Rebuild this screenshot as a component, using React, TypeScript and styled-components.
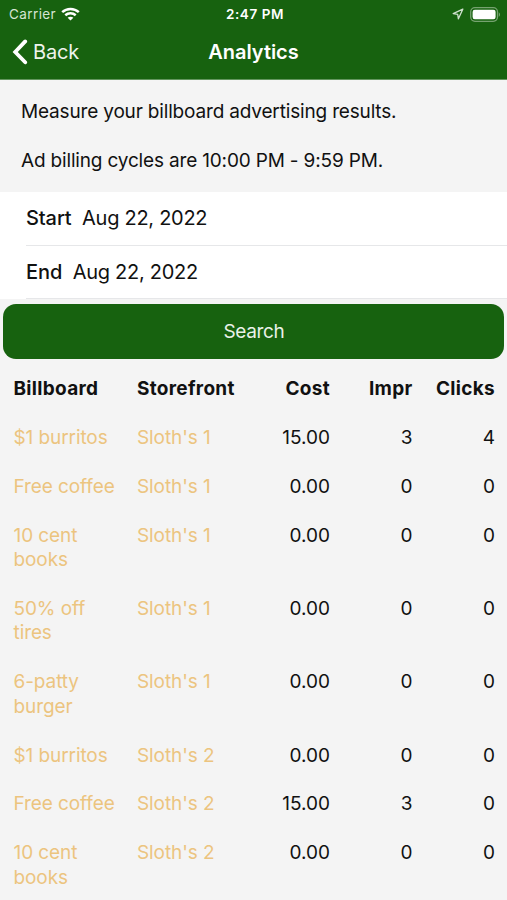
import React from "react";
import styled, { createGlobalStyle } from "styled-components";

const GlobalStyle = createGlobalStyle`
  * { box-sizing: border-box; }
  html, body { margin: 0; padding: 0; background: #f4f4f4; overflow: hidden; }
  #root { font-family: Inter, "Liberation Sans", sans-serif; }
`;

const green = "#17620f";

const Screen = styled.div`
  width: 507px;
  height: 900px;
  overflow: hidden;
  background: #f4f4f4;
  color: #111;
  font-size: 19px;
  line-height: 24.45px;
`;

const Header = styled.header`
  height: 79.5px;
  background: ${green};
  color: #fff;
  border-bottom: 1px solid #63965e;
`;

const StatusBar = styled.div`
  display: grid;
  grid-template-columns: 1fr auto 1fr;
  align-items: center;
  height: 27px;
  padding: 0 6px 0 9px;
  font-size: 13.5px;
  line-height: 27px;
`;

const Carrier = styled.div`
  display: flex;
  align-items: center;
  gap: 5px;
  color: #d5e5d3;
  letter-spacing: 0.4px;
`;

const Clock = styled.div`
  padding-top: 1px;
  font-weight: 600;
  letter-spacing: 0.6px;
`;

const StatusIcons = styled.div`
  display: flex;
  align-items: center;
  justify-content: flex-end;
  gap: 6px;
`;

const NavBar = styled.nav`
  display: grid;
  grid-template-columns: 1fr auto 1fr;
  align-items: center;
  height: 50px;
  padding: 0 12px;
`;

const BackButton = styled.div`
  display: flex;
  align-items: center;
  gap: 5px;
  font-size: 20px;
  letter-spacing: -0.2px;
  color: #edf4ec;
`;

const Title = styled.div`
  padding-top: 1px;
  font-size: 20px;
  font-weight: 600;
  letter-spacing: -0.05px;
`;

const Intro = styled.section`
  height: 112.5px;
  padding: 20.5px 21px 0;
  letter-spacing: -0.17px;
`;

const Paragraph = styled.p`
  margin: 0 0 24.45px;
  white-space: nowrap;
`;

const DateList = styled.section`
  height: 107px;
  background: #fff;
`;

const DateRow = styled.div`
  display: flex;
  align-items: center;
  gap: 10.5px;
  height: 53.5px;
  margin-left: 26px;
  border-bottom: 1px solid #e6e7e9;
  font-size: 20px;
  letter-spacing: -0.28px;
`;

const DateLabel = styled.span`
  font-weight: 500;
  letter-spacing: -0.1px;
`;

const SearchButton = styled.div`
  display: flex;
  align-items: center;
  justify-content: center;
  height: 54.5px;
  margin: 5px 3px 5.4px;
  padding: 2px 0 0 1px;
  border-radius: 13px;
  background: ${green};
  color: #e9f1e8;
  letter-spacing: -0.35px;
`;

const Row = styled.div<{ $head?: boolean }>`
  display: grid;
  grid-template-columns: 123.5px 111px 82px 82.5px 82.5px;
  padding: 13.1px 0 11.34px 13.5px;
  font-weight: ${(p) => (p.$head ? 700 : 400)};
  letter-spacing: ${(p) => (p.$head ? "0.3px" : "0")};
`;

const Link = styled.div`
  padding-right: 20px;
  color: #ecc47f;
  letter-spacing: -0.09px;
`;

const Heading = styled.div``;

const Num = styled.div`
  text-align: right;
`;

const records = [
  ["$1 burritos", "Sloth's 1", "15.00", "3", "4"],
  ["Free coffee", "Sloth's 1", "0.00", "0", "0"],
  ["10 cent books", "Sloth's 1", "0.00", "0", "0"],
  ["50% off tires", "Sloth's 1", "0.00", "0", "0"],
  ["6-patty burger", "Sloth's 1", "0.00", "0", "0"],
  ["$1 burritos", "Sloth's 2", "0.00", "0", "0"],
  ["Free coffee", "Sloth's 2", "15.00", "3", "0"],
  ["10 cent books", "Sloth's 2", "0.00", "0", "0"],
];

const WifiIcon = () => (
  <svg width="19" height="14" viewBox="0 0 19 14" fill="none" stroke="#fff" strokeWidth="2.5">
    <path d="M1.2 5.1C5.8 .8 13.2 .8 17.8 5.1" />
    <path d="M4.3 8.2C7.2 5.6 11.8 5.6 14.7 8.2" />
    <path d="M9.5 13.6L6.6 10.7C8.2 9.3 10.8 9.3 12.4 10.7Z" fill="#fff" stroke="none" />
  </svg>
);

const LocationIcon = () => (
  <svg width="12" height="12" viewBox="0 0 12 12" fill="none" stroke="#cfe0cd" strokeWidth="1.3" strokeLinejoin="round">
    <path d="M10.8 1.2L1.2 5.6L5.7 6.3L6.4 10.8Z" />
  </svg>
);

const BatteryIcon = () => (
  <svg width="31" height="15" viewBox="0 0 31 15">
    <rect x=".7" y=".7" width="26.8" height="13.6" rx="4.2" fill="none" stroke="#76a270" strokeWidth="1.3" />
    <rect x="2.6" y="2.7" width="23" height="9.6" rx="2.2" fill="#fff" />
    <path d="M28.8 5.2C30.4 6 30.4 9 28.8 9.8Z" fill="#76a270" />
  </svg>
);

const BackIcon = () => (
  <svg width="16" height="26" viewBox="0 0 16 26" fill="none" stroke="#fff" strokeWidth="3.8" strokeLinecap="round" strokeLinejoin="miter">
    <path d="M13.2 2.4L3.2 13L13.2 23.3" />
  </svg>
);

export default function App() {
  return (
    <>
      <GlobalStyle />
      <Screen>
        <Header>
          <StatusBar>
            <Carrier>Carrier<WifiIcon /></Carrier>
            <Clock>2:47 PM</Clock>
            <StatusIcons><LocationIcon /><BatteryIcon /></StatusIcons>
          </StatusBar>
          <NavBar>
            <BackButton><BackIcon />Back</BackButton>
            <Title>Analytics</Title>
          </NavBar>
        </Header>
        <Intro>
          <Paragraph>Measure your billboard advertising results.</Paragraph>
          <Paragraph>Ad billing cycles are 10:00 PM - 9:59 PM.</Paragraph>
        </Intro>
        <DateList>
          <DateRow><DateLabel>Start</DateLabel><span>Aug 22, 2022</span></DateRow>
          <DateRow><DateLabel>End</DateLabel><span>Aug 22, 2022</span></DateRow>
        </DateList>
        <SearchButton>Search</SearchButton>
        <Row $head>
          <Heading>Billboard</Heading>
          <Heading>Storefront</Heading>
          <Num>Cost</Num>
          <Num>Impr</Num>
          <Num>Clicks</Num>
        </Row>
        {records.map(([ad, store, cost, impressions, clicks], i) => (
          <Row key={i}>
            <Link>{ad}</Link>
            <Link>{store}</Link>
            <Num>{cost}</Num>
            <Num>{impressions}</Num>
            <Num>{clicks}</Num>
          </Row>
        ))}
      </Screen>
    </>
  );
}
